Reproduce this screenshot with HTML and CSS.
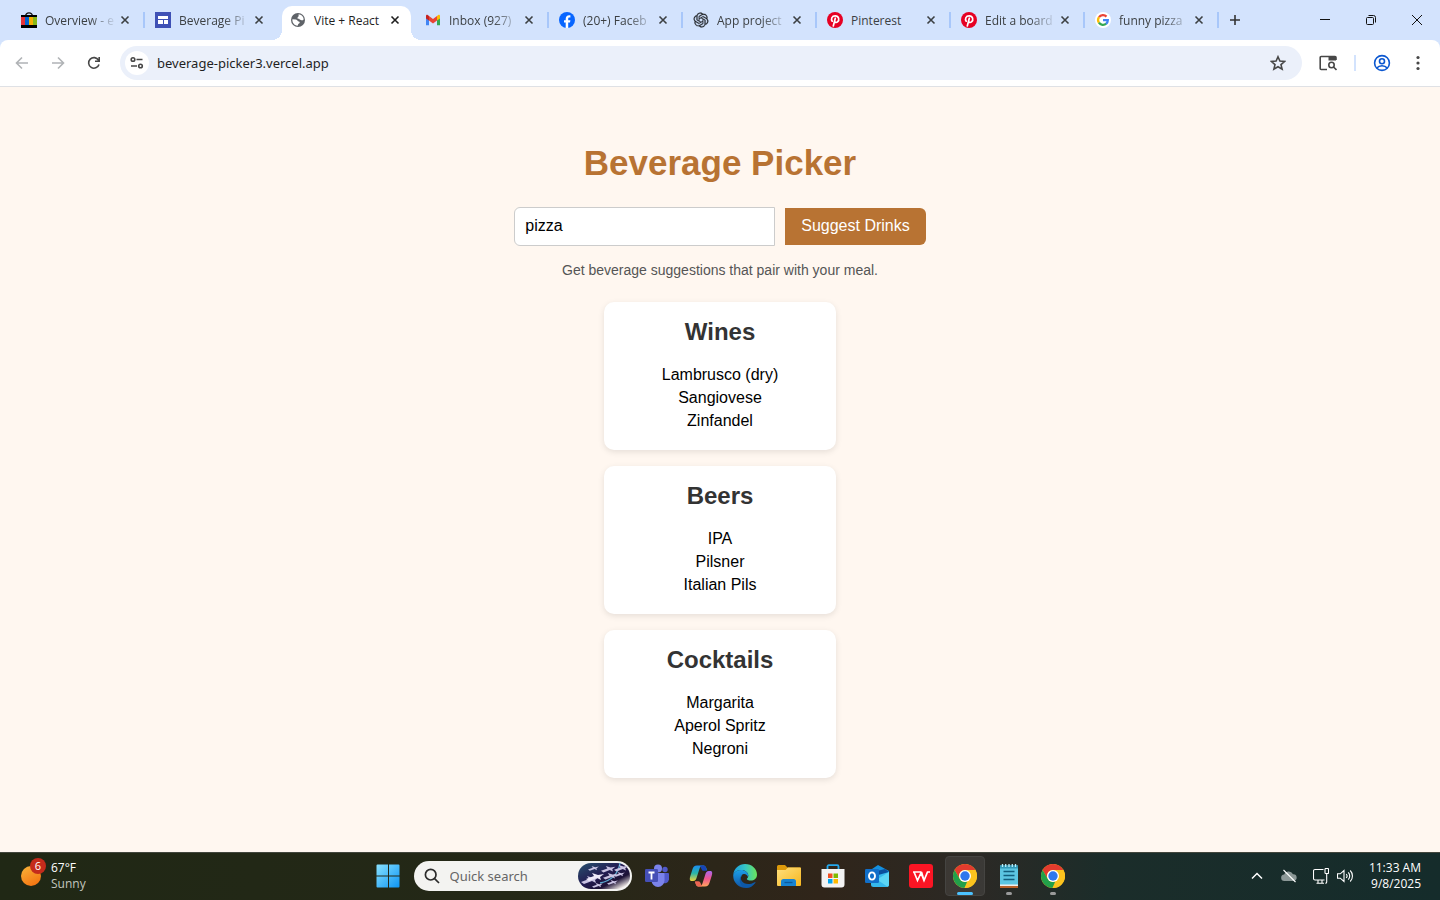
FILE: index.html
```html
<!DOCTYPE html>
<html lang="en">
<head>
  <meta charset="UTF-8">
  <meta name="viewport" content="width=device-width, initial-scale=1.0">
  <title>Vite + React</title>
  <link rel="stylesheet" href="styles.css">
</head>
<body>

<!-- Shared icons -->
<svg class="defs" aria-hidden="true">
  <symbol id="x" viewBox="0 0 16 16"><path d="M4.5 4.5l7 7M11.5 4.5l-7 7" fill="none" stroke="currentColor" stroke-width="1.6"/></symbol>
  <symbol id="pin" viewBox="0 0 16 16">
    <circle cx="8" cy="8" r="8" fill="#e60023"/>
    <path d="M5.2 9.2C3.8 7.2 4.7 3.8 8.2 3.8c3.8 0 4.5 4.3 2.3 6.1-1.3 1-2.9.4-3-.8M8.3 6.2L6.3 14" fill="none" stroke="#fff" stroke-width="1.7" stroke-linecap="round"/>
  </symbol>
  <symbol id="chrome" viewBox="0 0 24 24">
    <circle cx="12" cy="12" r="12" fill="#fcc31e"/>
    <path d="M12 0a12 12 0 0 1 10.4 6H12a6 6 0 0 0-5.2 9L1.6 6A12 12 0 0 1 12 0z" fill="#e33b2e"/>
    <path d="M1.6 6l5.2 9A6 6 0 0 0 12 18l2.2-.4L11.5 24A12 12 0 0 1 1.6 6z" fill="#22a04a"/>
    <path d="M12 6h10.4A12 12 0 0 1 11.5 24l5.7-9A6 6 0 0 0 12 6z" fill="#fcc31e"/>
    <circle cx="12" cy="12" r="6" fill="#fff"/>
    <circle cx="12" cy="12" r="4.7" fill="#2f78ed"/>
  </symbol>
</svg>

<!-- Tabs -->
<nav class="tab-strip">
  <div class="tab">
    <svg class="fav" viewBox="0 0 16 16"><path d="M4.5 4C5-.3 11-.3 11.5 4" fill="none" stroke="#111" stroke-width="1.3"/><path d="M0 3h16v2H0zM0 13h16v3H0z" fill="#000"/><path d="M0 5h4v8H0z" fill="#e53238"/><path d="M4 5h4v8H4z" fill="#0064d2"/><path d="M8 5h4v8H8z" fill="#f5af02"/><path d="M12 5h4v8h-4z" fill="#86b817"/></svg>
    <span class="tab-title">Overview - e</span>
    <button class="tab-close" aria-label="Close tab"><svg><use href="#x"/></svg></button>
  </div>
  <div class="tab no-line">
    <svg class="fav" viewBox="0 0 16 16"><path d="M0 0h16v16H0z" fill="#3f51b5"/><path d="M3 4h10v3H3zM3 8h5v4H3zM9 8h4v4H9z" fill="#fff"/></svg>
    <span class="tab-title">Beverage Pi</span>
    <button class="tab-close" aria-label="Close tab"><svg><use href="#x"/></svg></button>
  </div>
  <div class="tab active">
    <svg class="fav" viewBox="0 0 16 16"><circle cx="8" cy="8" r="7" fill="#5f6368"/><path d="M8.6 2.3c2.8.2 4.8 2.3 5.1 4.9-.8 1.5-2 1.2-2.9.8-.7-.4-1.3-.3-1.8-1.2-.8 0-1.8-.2-1.5-1.4.8-.4 1.3-.8 1.1-3.1zM2.4 7.3l3.6.2c1.7.4 1.2 1.8 3 2 1.2.3.9 1.9-.3 2.2-.8.3-.4 1.2-1.2 2C4.2 13.6 2 10.5 2.4 7.3z" fill="#fff"/></svg>
    <span class="tab-title">Vite + React</span>
    <button class="tab-close" aria-label="Close tab"><svg><use href="#x"/></svg></button>
  </div>
  <div class="tab">
    <svg class="fav" viewBox="0 0 16 16"><path d="M1 4v9.3h3V6z" fill="#4285f4"/><path d="M15 4v9.3h-3V6z" fill="#34a853"/><path d="M12 4l1.5-1.2C14.3 2.3 15 3 15 4v2.5L12 8.6z" fill="#fbbc04"/><path d="M1 4c0-1.2.9-1.7 1.7-1.1L4 4v4.6L1 6.4z" fill="#c5221f"/><path d="M4 4l4 3 4-3v4.600l-4 3-4-3z" fill="#ea4335"/></svg>
    <span class="tab-title">Inbox (927)</span>
    <button class="tab-close" aria-label="Close tab"><svg><use href="#x"/></svg></button>
  </div>
  <div class="tab">
    <svg class="fav" viewBox="0 0 16 16"><circle cx="8" cy="8" r="8" fill="#0866ff"/><path d="M6.7 16v-5.400H5V8.200h1.700V7c0-2.500 1.200-3.800 3.600-3.800l1.100.1v2.200h-.9c-1 0-1.300.5-1.300 1.400v1.300h2.200l-.4 2.400H9.200V16z" fill="#fff"/></svg>
    <span class="tab-title">(20+) Faceb</span>
    <button class="tab-close" aria-label="Close tab"><svg><use href="#x"/></svg></button>
  </div>
  <div class="tab">
    <svg class="fav" viewBox="-1 -1 26 26"><path fill="#25292f" stroke="#25292f" stroke-width=".4" d="M22.282 9.821a5.985 5.985 0 0 0-.516-4.910 6.046 6.046 0 0 0-6.510-2.900A6.065 6.065 0 0 0 4.981 4.182a5.985 5.985 0 0 0-3.998 2.900 6.046 6.046 0 0 0 .743 7.097 5.980 5.980 0 0 0 .510 4.911 6.051 6.051 0 0 0 6.515 2.900A5.985 5.985 0 0 0 13.260 24a6.056 6.056 0 0 0 5.772-4.206 5.990 5.990 0 0 0 3.998-2.900 6.056 6.056 0 0 0-.748-7.073zM13.260 22.430a4.476 4.476 0 0 1-2.876-1.041l.141-.080 4.779-2.758a.795.795 0 0 0 .393-.681v-6.737l2.020 1.169a.071.071 0 0 1 .038.052v5.583a4.504 4.504 0 0 1-4.495 4.493zM3.600 18.304a4.470 4.470 0 0 1-.535-3.014l.142.085 4.783 2.759a.771.771 0 0 0 .781 0l5.843-3.369v2.332a.080.080 0 0 1-.033.062L9.740 19.950a4.500 4.500 0 0 1-6.140-1.646zM2.341 7.896a4.485 4.485 0 0 1 2.366-1.973V11.600a.766.766 0 0 0 .388.677l5.815 3.354-2.020 1.169a.076.076 0 0 1-.071 0l-4.830-2.787A4.504 4.504 0 0 1 2.341 7.872zm16.597 3.856l-5.833-3.388L15.119 7.200a.076.076 0 0 1 .071 0l4.830 2.791a4.494 4.494 0 0 1-.676 8.105v-5.678a.790.790 0 0 0-.406-.666zm2.010-3.023l-.141-.085-4.774-2.782a.776.776 0 0 0-.785 0L9.409 9.230V6.897a.066.066 0 0 1 .028-.061l4.830-2.787a4.499 4.499 0 0 1 6.681 4.660zM8.307 12.863l-2.020-1.164a.080.080 0 0 1-.038-.057V6.075a4.499 4.499 0 0 1 7.376-3.454l-.142.081-4.778 2.758a.795.795 0 0 0-.393.681zm1.097-2.365l2.602-1.500 2.607 1.500v2.999l-2.597 1.500-2.607-1.500z"/></svg>
    <span class="tab-title">App project</span>
    <button class="tab-close" aria-label="Close tab"><svg><use href="#x"/></svg></button>
  </div>
  <div class="tab">
    <svg class="fav"><use href="#pin"/></svg>
    <span class="tab-title short">Pinterest</span>
    <button class="tab-close" aria-label="Close tab"><svg><use href="#x"/></svg></button>
  </div>
  <div class="tab">
    <svg class="fav"><use href="#pin"/></svg>
    <span class="tab-title">Edit a board</span>
    <button class="tab-close" aria-label="Close tab"><svg><use href="#x"/></svg></button>
  </div>
  <div class="tab">
    <svg class="fav" viewBox="0 0 16 16"><circle cx="8" cy="8" r="8" fill="#fff"/><g fill="none" stroke-width="2.3"><path d="M4 5.2A4.9 4.9 0 0 1 11.5 4.6" stroke="#ea4335"/><path d="M3.9 10.7a4.9 4.9 0 0 1 .1-5.500" stroke="#fbbc05"/><path d="M11.2 11.700a4.900 4.900 0 0 1-7.300-1" stroke="#34a853"/><path d="M8 8.200h4.800a4.800 4.800 0 0 1-1.700 3.600" stroke="#4285f4"/></g></svg>
    <span class="tab-title">funny pizza</span>
    <button class="tab-close" aria-label="Close tab"><svg><use href="#x"/></svg></button>
  </div>
  <button class="new-tab" aria-label="New tab"><svg viewBox="0 0 16 16"><path d="M8 3v10M3 8h10" stroke="#333" stroke-width="1.6"/></svg></button>
  <div class="window-buttons">
    <button aria-label="Minimize"><svg viewBox="0 0 16 16"><path d="M3 7.500h10"/></svg></button>
    <button aria-label="Restore"><svg viewBox="0 0 16 16"><rect x="3.500" y="5.500" width="7" height="7" rx="1"/><path d="M5.500 3.500h5a2 2 0 0 1 2 2v5"/></svg></button>
    <button aria-label="Close"><svg viewBox="0 0 16 16"><path d="M3 3l10 10M13 3L3 13"/></svg></button>
  </div>
</nav>

<!-- Toolbar -->
<div class="toolbar-wrap">
  <div class="toolbar">
    <button class="tool faded" aria-label="Back"><svg viewBox="0 0 16 16"><path d="M14 8H3M8 2.500L2.500 8 8 13.500"/></svg></button>
    <button class="tool faded" aria-label="Forward"><svg viewBox="0 0 16 16"><path d="M2 8h11M8 2.500L13.500 8 8 13.500"/></svg></button>
    <button class="tool" aria-label="Reload"><svg viewBox="0 0 16 16"><path d="M13 9.500A5.300 5.300 0 1 1 12.500 5.200M13.200 2v4.200H9"/></svg></button>
    <div class="address">
      <button class="site-info" aria-label="Site information"><svg viewBox="0 0 16 16"><circle cx="4" cy="4.500" r="1.800"/><circle cx="11.500" cy="11" r="1.800"/><path d="M7.500 4.500h6M2 11h6"/></svg></button>
      <input type="text" aria-label="Address" value="beverage-picker3.vercel.app">
      <button class="tool" aria-label="Bookmark this tab"><svg viewBox="0 0 16 16"><path d="M8 1.800l1.900 4.300 4.700.4-3.600 3.100 1.100 4.600L8 11.800l-4.100 2.400L5 9.600 1.400 6.500l4.700-.4z"/></svg></button>
    </div>
    <button class="tool" aria-label="Search side panel"><svg class="wide" viewBox="0 0 18 16"><path d="M8 14.500H2.200a1 1 0 0 1-1-1v-11a1 1 0 0 1 1-1H16a1 1 0 0 1 1 1V5"/><path d="M9.500 1H17v4.500H9.500z" fill="#474747" stroke="none"/><circle cx="12.500" cy="10" r="2.700"/><path d="M14.500 12l3 3"/></svg></button>
    <span class="divider"></span>
    <button class="tool profile" aria-label="Profile"><svg class="wide" viewBox="0 0 18 18"><circle cx="9" cy="9" r="7.400"/><circle cx="9" cy="7.200" r="2.500"/><path d="M3.800 14c2.500-3 7.900-3 10.400 0"/></svg></button>
    <button class="tool" aria-label="Menu"><svg viewBox="0 0 16 16"><g fill="#474747" stroke="none"><circle cx="8" cy="2.500" r="1.600"/><circle cx="8" cy="8" r="1.600"/><circle cx="8" cy="13.500" r="1.600"/></g></svg></button>
  </div>
</div>

<main>
  <h1>Beverage Picker</h1>
  <form class="picker" onsubmit="return false">
    <input type="text" aria-label="Meal" value="pizza">
    <button type="submit">Suggest Drinks</button>
  </form>
  <p class="hint">Get beverage suggestions that pair with your meal.</p>

  <div class="results">
    <section class="card">
      <h2>Wines</h2>
      <ul>
        <li>Lambrusco (dry)</li>
        <li>Sangiovese</li>
        <li>Zinfandel</li>
      </ul>
    </section>
    <section class="card">
      <h2>Beers</h2>
      <ul>
        <li>IPA</li>
        <li>Pilsner</li>
        <li>Italian Pils</li>
      </ul>
    </section>
    <section class="card">
      <h2>Cocktails</h2>
      <ul>
        <li>Margarita</li>
        <li>Aperol Spritz</li>
        <li>Negroni</li>
      </ul>
    </section>
  </div>
</main>

<!-- Taskbar -->
<footer class="taskbar">
  <button class="weather">
    <span class="sun"><span class="badge">6</span></span>
    <span class="weather-text"><span>67°F</span><span class="dim">Sunny</span></span>
  </button>

  <div class="apps">
    <button class="app" aria-label="Start"><svg viewBox="0 0 24 24"><defs><linearGradient id="win" x1="0" y1="0" x2="24" y2="24" gradientUnits="userSpaceOnUse"><stop stop-color="#8be3ff"/><stop offset="1" stop-color="#0a93f5"/></linearGradient></defs><path d="M1.500.5H12v11H.5v-10a1 1 0 0 1 1-1zM13 .5h9.500a1 1 0 0 1 1 1v10H13zM.5 12.500H12v11H1.500a1 1 0 0 1-1-1zM13 12.500h10.500v10a1 1 0 0 1-1 1H13z" fill="url(#win)"/></svg></button>
    <div class="search">
      <svg class="lens" viewBox="0 0 16 16"><circle cx="6.700" cy="6.700" r="5.300"/><path d="M10.600 10.600L15 15"/></svg>
      <input type="text" aria-label="Quick search" placeholder="Quick search">
      <svg class="jets" viewBox="0 0 52 26">
        <defs>
          <linearGradient id="sky" x1="0" y1="0" x2="1" y2="1"><stop stop-color="#28516e"/><stop offset=".45" stop-color="#231c52"/><stop offset=".7" stop-color="#1d1236"/><stop offset=".9" stop-color="#f2ece8"/></linearGradient>
          <path id="jet" d="M0 6l8-3-2-3 6 2 6-1-4 3 1 3-4-2-8 3z"/>
        </defs>
        <rect width="52" height="26" rx="13" fill="url(#sky)"/>
        <path d="M42 0C40 12 33 18 22 20" fill="none" stroke="#5aa8cf" stroke-width="1.300"/>
        <g fill="#c9c2e2"><use href="#jet" x="3" y="13"/><use href="#jet" x="8" y="10" fill="#eeeafa"/><use href="#jet" transform="translate(10 3) scale(.6)"/><use href="#jet" transform="translate(23 3) scale(.8)"/><use href="#jet" transform="translate(36 2) scale(.8)"/><use href="#jet" transform="translate(25 10) scale(.8)"/><use href="#jet" transform="translate(36 9) scale(.6)"/><use href="#jet" transform="translate(14 20) scale(.6)"/><use href="#jet" transform="translate(29 17) scale(.6)"/></g>
      </svg>
    </div>
    <button class="app" aria-label="Teams"><svg viewBox="0 0 24 24"><circle cx="20" cy="5.500" r="2.700" fill="#5059c9"/><path d="M17 9h6a1 1 0 0 1 1 1v5.500a4.500 4.500 0 0 1-7 3z" fill="#5059c9"/><circle cx="13" cy="4.500" r="4" fill="#7b83eb"/><path d="M8 9h10.500a1 1 0 0 1 1 1v6.500a6.500 6.500 0 0 1-13 0V10z" fill="#7b83eb"/><rect y="5" width="13" height="13" rx="1.200" fill="#454fb6"/><path d="M3.500 8.500h6M6.500 8.500v7" stroke="#fff" stroke-width="1.800"/></svg></button>
    <button class="app" aria-label="Copilot"><svg viewBox="0 0 24 24"><defs><linearGradient id="cpA" x1="0" y1="0" x2="0" y2="1"><stop stop-color="#1b8df2"/><stop offset=".5" stop-color="#29b6a9"/><stop offset="1" stop-color="#f0d43a"/></linearGradient><linearGradient id="cpB" x1="0" y1="0" x2="0" y2="1"><stop stop-color="#a866ee"/><stop offset=".5" stop-color="#f0568f"/><stop offset="1" stop-color="#ffa45c"/></linearGradient></defs><path d="M15.500 2h-2.200c-1.400 0-2.200 1-2.800 2.800L8 12.500C7.400 15 6.500 17 4 17H2.600C.4 17 .6 14.500 1.200 12.500l2.200-7C4.200 3 5.300 1.500 8 1.500h6c1.500 0 2.500.4 3.200 2.300L18 6.300C16.500 6.500 16.400 3.700 15.500 2z" fill="url(#cpA)"/><path d="M11 1.500h3c1.500 0 2.500.5 3.200 2.500l.8 2.800h-3.500c-2 0-2.600-3.500-3.500-5.300z" fill="#1744b5"/><path d="M8.500 22h2.200c1.400 0 2.200-1 2.800-2.800L16 11.500C16.600 9 17.500 7 20 7h1.400c2.200 0 2 2.500 1.400 4.500l-2.200 7c-.8 2.500-1.900 4-4.600 4h-6c-1.500 0-2.500-.4-3.200-2.300L6 17.700c1.500-.2 1.600 2.600 2.500 4.300z" fill="url(#cpB)"/><path d="M13 22.500h-3c-1.500 0-2.500-.5-3.200-2.500L6 17.200h3.500c2 0 2.600 3.500 3.500 5.300z" fill="#ec6552"/></svg></button>
    <button class="app" aria-label="Edge"><svg viewBox="0 0 24 24"><defs><linearGradient id="edA" x1="0" y1="0" x2="1" y2="0"><stop stop-color="#1b9de2"/><stop offset=".5" stop-color="#35c5c5"/><stop offset="1" stop-color="#6be45a"/></linearGradient><linearGradient id="edB" x1="0" y1="0" x2="0" y2="1"><stop stop-color="#1b9fe8"/><stop offset="1" stop-color="#1053a4"/></linearGradient></defs><path d="M.3 10.500C1 4.500 6 0 12 0c7 0 12 5 12 10.500 0 4-3 6-6 6-2.500 0-4.200-.9-4.200-1.600 0-.6 1.500-1 1.500-3.200C15.300 8 11.500 6 8 6 4.500 6 1.500 8 .3 10.500z" fill="url(#edA)"/><path d="M.3 10.500C1.500 8 4.500 6 8 6c4 0 7.300 2.500 7.300 5.600l-.4 1.400C14.500 11 12.500 9.500 10.500 10c-3.700 1-4.500 10 3.500 13.700A12 12 0 0 1 .3 10.500z" fill="url(#edB)"/><path d="M9 11c-4 5.500 3.500 12.500 12.700 7.200.6-.3 1 .2.600.7C20 22 17 24 13.500 24 7 23 4.500 15 9 11z" fill="#0d58a6"/></svg></button>
    <button class="app" aria-label="File Explorer"><svg viewBox="0 0 24 24"><defs><linearGradient id="fo" x1="0" y1="0" x2="1" y2="1"><stop stop-color="#ffe07d"/><stop offset="1" stop-color="#f7b61f"/></linearGradient></defs><path d="M0 2.500A1.500 1.500 0 0 1 1.500 1H8l2.500 2.500H23a1 1 0 0 1 1 1V10H0z" fill="#dd9a0b"/><path d="M0 6h8.500l2.500-2.500h12a1 1 0 0 1 1 1V21a1 1 0 0 1-1 1H1a1 1 0 0 1-1-1z" fill="url(#fo)"/><path d="M4 22v-4.500A2.500 2.500 0 0 1 6.500 15h10a2.500 2.500 0 0 1 2.500 2.500V22z" fill="#1683d2"/><path d="M7.500 18.500h8" stroke="#0c599b" stroke-width="1.300"/></svg></button>
    <button class="app" aria-label="Microsoft Store"><svg viewBox="0 0 24 24"><path d="M6.500 6V2.500a1.300 1.300 0 0 1 1.300-1.300h8.400a1.300 1.300 0 0 1 1.300 1.300V6" fill="none" stroke="#25a8ed" stroke-width="1.800"/><path d="M.5 5h23v15.500a3 3 0 0 1-3 3h-17a3 3 0 0 1-3-3z" fill="#f3f3f3"/><path d="M7 9.500h4.500V14H7z" fill="#f25022"/><path d="M12.500 9.500H17V14h-4.500z" fill="#7fba00"/><path d="M7 15h4.500v4.500H7z" fill="#00a4ef"/><path d="M12.500 15H17v4.500h-4.500z" fill="#ffb900"/></svg></button>
    <button class="app" aria-label="Outlook"><svg viewBox="0 0 24 24"><path d="M4 7l9-6 11 6v12H4z" fill="#1490df"/><path d="M12 7l8-2 4 3-9 7z" fill="#0b4e9c"/><path d="M6 13l18-5v12.500a2.500 2.500 0 0 1-2.500 2.500h-13A2.500 2.500 0 0 1 6 20.500z" fill="#35b9ed"/><path d="M24 8v12.500a2.500 2.500 0 0 1-1.500 2.300L12 15.500z" fill="#5bd5f5"/><rect y="5" width="14" height="14" rx="1.200" fill="#116fc9"/><ellipse cx="7" cy="12" rx="3" ry="3.600" fill="none" stroke="#fff" stroke-width="1.900"/></svg></button>
    <button class="app" aria-label="WPS Office"><svg viewBox="0 0 24 24"><rect width="24" height="24" rx="3" fill="#fb1524"/><path d="M4 8h8.500M5 8l3.500 8.500L12 9l3 7.500L18.500 8H21M12.500 8l2.500 8.500" fill="none" stroke="#fff" stroke-width="1.700"/></svg></button>
    <button class="app open current" aria-label="Chrome"><svg><use href="#chrome"/></svg></button>
    <button class="app open" aria-label="Notepad"><svg viewBox="0 0 24 24"><path d="M3 1.500h18V21H3z" fill="#5cc5e2"/><path d="M3 1.500h18v3H3z" fill="#3399b8"/><path d="M5.500 0v3M8.700 0v3M12 0v3M15.300 0v3M18.500 0v3" stroke="#b8eefa" stroke-width="1.300"/><path d="M6.500 7.500h11M6.500 11.500h11M6.500 15.500h11" stroke="#125e7d" stroke-width="1.600"/><path d="M3 20.500h18V22H3z" fill="#eee"/><path d="M3 22h18v2H3z" fill="#b8612a"/></svg></button>
    <button class="app open" aria-label="Chrome"><svg><use href="#chrome"/></svg></button>
  </div>

  <div class="tray">
    <svg class="chevron" viewBox="0 0 16 16"><path d="M3 10.500l5-5 5 5" stroke-width="1.500"/></svg>
    <svg class="cloud" viewBox="0 0 16 16"><path d="M3.500 13a3.200 3.200 0 0 1-.3-6.400A4.800 4.800 0 0 1 12 6.200a3.400 3.400 0 0 1 .5 6.800z" fill="#8c9897" stroke="none"/><path d="M2.500 2l12 12"/></svg>
    <svg viewBox="0 0 16 16"><path d="M10.500 1.500H2a1.500 1.500 0 0 0-1.500 1.500v7.500A1.500 1.500 0 0 0 2 12h9.500M5 12v3M9 12v3M3.500 15.300H11"/><rect x="12" y=".5" width="3.500" height="5" rx=".8"/><path d="M13.700 5.500V14c0 .8-.6 1.300-1.400 1.300"/></svg>
    <svg viewBox="0 0 16 16"><path d="M.5 5.800h2.800L7 2.500v11l-3.700-3.300H.5zM9.200 6c1 1.100 1 2.900 0 4M11.200 4.300c2 2 2 5.400 0 7.400M13.200 2.500c3 3 3 8 0 11"/></svg>
    <div class="clock"><time>11:33 AM</time><time>9/8/2025</time></div>
  </div>
</footer>

</body>
</html>
```
FILE: styles.css
```css
* { box-sizing: border-box; }
body {
  font-family: Arial, "Liberation Sans", sans-serif;
  margin: 0;
  min-height: 100vh;
  display: flex;
  flex-direction: column;
  background: #fff7f0;
  color: #000;
}
button { border: none; background: none; padding: 0; font: inherit; color: inherit; cursor: pointer; }
svg { width: 16px; height: 16px; flex: none; display: block; }
.defs { position: absolute; width: 0; height: 0; }

/* Tabs */
.tab-strip {
  display: flex; align-items: flex-end;
  height: 40px; padding-left: 11px;
  background: #d3e3fd; color: #3c4043;
  font: 12px/16px "Open Sans", "Noto Sans", sans-serif;
}
.tab {
  display: flex; align-items: center;
  flex: 0 1 134px; min-width: 0;
  height: 40px; padding-left: 10px;
}
.tab::after { content: ""; width: 2px; height: 16px; margin-left: 10px; background: #a8c7fa; }
.tab.no-line::after { background: none; }
.tab-title {
  flex: 1; min-width: 0; margin-left: 8px; padding-top: 2px;
  overflow: hidden; white-space: nowrap;
  mask-image: linear-gradient(to right, #000 44px, transparent 72px);
}
.tab-title.short { mask-image: none; }
.tab.active {
  position: relative;
  flex-basis: 129px; height: 34px;
  margin: 0 4px 0 3px; padding: 0 8px 6px;
  background: #fff; color: #1f1f1f;
  border-radius: 10px 10px 0 0;
}
.active .tab-title { mask-image: none; }
.tab.active::before, .tab.active::after {
  content: ""; position: absolute; bottom: 0;
  width: 10px; height: 10px; margin: 0;
}
.tab.active::before { left: -10px; background: radial-gradient(circle at 0 0, transparent 10px, #fff 10px); }
.tab.active::after { right: -10px; background: radial-gradient(circle at 100% 0, transparent 10px, #fff 10px); }
.new-tab { display: grid; place-items: center; width: 32px; height: 40px; }
.window-buttons { display: flex; margin-left: auto; }
.window-buttons button { display: grid; place-items: center; width: 46px; height: 40px; }
.window-buttons svg { fill: none; stroke: #111; stroke-width: 1; }

/* Toolbar */
.toolbar-wrap { background: #d3e3fd; }
.toolbar {
  display: flex; align-items: center; gap: 8px;
  height: 47px; padding: 0 8px;
  background: #fff;
  border-bottom: 1px solid #dfe1e5;
  border-radius: 8px 8px 0 0;
}
.tool { display: grid; place-items: center; width: 28px; height: 28px; }
.tool svg, .site-info svg { fill: none; stroke: #474747; stroke-width: 1.6; }
.tool .wide { width: 18px; }
.tool.faded svg { stroke: #b0b3b6; }
.tool.profile svg { height: 18px; stroke: #0b57d0; }
.divider { width: 2px; height: 16px; margin: 0 4px; background: #d3e3fd; }
.address {
  display: flex; align-items: center; flex: 1;
  height: 34px; margin: 0 4px; padding: 0 10px 0 5px;
  background: #ebf0fa; border-radius: 17px;
}
.site-info { display: grid; place-items: center; width: 24px; height: 24px; background: #fff; border-radius: 50%; }
.address input {
  flex: 1; min-width: 0; margin-left: 8px; padding: 0;
  border: none; outline: none; background: none; color: #1f1f1f;
  font: 13px/20px "Noto Sans", "Open Sans", sans-serif;
}

/* Page */
main { flex: 1; padding: 56px 16px 32px; text-align: center; }
h1 { margin: 0 0 24px; font-size: 35px; line-height: 40px; color: #b87333; }
.picker { display: flex; justify-content: center; align-items: center; gap: 10px; }
.picker input {
  width: 261px; height: 39px; padding: 0 10px 2px;
  border: 1px solid #ccc; border-radius: 6px 0 0 6px;
  font: 16px/20px Arial, "Liberation Sans", sans-serif;
}
.picker button {
  height: 37px; padding: 0 16px 2px;
  background: #b87333; color: #fff;
  font-size: 16px; border-radius: 0 6px 6px 0;
}
.hint { margin: 16px 0 24px; font-size: 14px; line-height: 16px; color: #555; }
.results { display: flex; flex-direction: column; align-items: center; gap: 16px; }
.card {
  width: 232px; padding: 16px 16px 18px;
  background: #fff; border-radius: 10px;
  box-shadow: 0 2px 6px rgba(0,0,0,0.1);
}
.card h2 { margin: 0 0 17px; font-size: 24px; line-height: 28px; color: #333; }
.card ul { list-style: none; margin: 0; padding: 0; }
.card li { font-size: 16px; line-height: 23px; }

/* Taskbar */
.taskbar {
  display: grid; grid-template-columns: 1fr auto 1fr; align-items: center;
  height: 48px;
  background: linear-gradient(90deg, #202815, #242817 35%, #30251a 57%, #2b2925 68%, #1b2d2a 77%, #152c2b);
  box-shadow: inset 0 1px #42463d;
  color: #fff;
  font: 12px/16px "Open Sans", "Noto Sans", sans-serif;
}
.weather { display: flex; align-items: center; gap: 10px; padding-left: 21px; text-align: left; }
.weather-text { display: flex; flex-direction: column; }
.dim { color: #c3c7bf; }
.sun { position: relative; width: 20px; height: 20px; border-radius: 50%; background: linear-gradient(150deg, #f9b53a, #f36b0c); }
.badge {
  position: absolute; top: -8px; right: -5px;
  width: 16px; height: 16px; border-radius: 50%;
  background: #c42b1c; font-size: 11px; text-align: center;
}
.apps { display: flex; align-items: center; }
.app { display: grid; place-items: center; position: relative; width: 44px; height: 40px; }
.app svg { width: 24px; height: 24px; }
.app.current::before {
  content: ""; position: absolute; inset: 0 2px;
  border: 1px solid #454441; border-radius: 4px; background: rgba(255,255,255,0.08);
}
.app.current svg { position: relative; }
.app.open::after {
  content: ""; position: absolute; bottom: 1px; left: 19px;
  width: 6px; height: 3px; border-radius: 2px; background: #9a9a9a;
}
.app.current::after { left: 14px; width: 16px; background: #4cc2ff; }
.search {
  display: flex; align-items: center;
  width: 218px; height: 30px; margin: 0 3px 0 4px; padding: 0 2px 0 10px;
  background: #f3f3f1; border-radius: 15px;
}
.lens { fill: none; stroke: #2b2b2b; stroke-width: 1.7; }
.search input {
  flex: 1; min-width: 0; margin-left: 10px; padding: 0;
  border: none; outline: none; background: none;
  font: 13px/20px "Noto Sans", "Open Sans", sans-serif;
}
.search input::placeholder { color: #666; opacity: 1; }
.search .jets { width: 52px; height: 26px; }
.tray { display: flex; align-items: center; justify-content: flex-end; gap: 8px; padding-right: 19px; }
.tray svg { fill: none; stroke: #fff; stroke-width: 1.1; }
.tray .chevron, .tray .cloud { margin-right: 8px; }
.clock { display: flex; flex-direction: column; text-align: right; margin-left: 8px; }
```
